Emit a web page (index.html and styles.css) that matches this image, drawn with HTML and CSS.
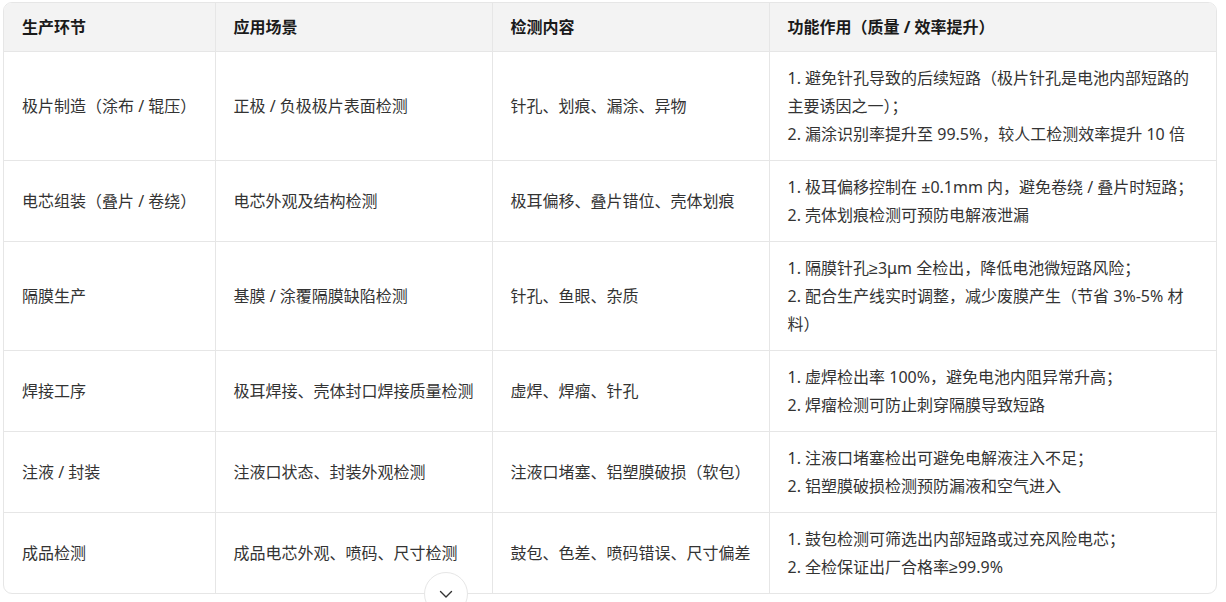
FILE: index.html
```html
<!DOCTYPE html>
<html lang="zh-CN">
<head>
<meta charset="utf-8">
<title>表格</title>
<link rel="stylesheet" href="styles.css">
</head>
<body>
<div class="wrap">
  <div class="table-box">
    <table class="grid">
      <colgroup>
        <col class="c1"><col class="c2"><col class="c3"><col class="c4">
      </colgroup>
      <thead>
        <tr>
          <th>生产环节</th>
          <th>应用场景</th>
          <th>检测内容</th>
          <th>功能作用（质量 / 效率提升）</th>
        </tr>
      </thead>
      <tbody>
        <tr>
          <td>极片制造（涂布 / 辊压）</td>
          <td>正极 / 负极极片表面检测</td>
          <td>针孔、划痕、漏涂、异物</td>
          <td>1. 避免针孔导致的后续短路（极片针孔是电池内部短路的主要诱因之一）；<br>2. 漏涂识别率提升至 99.5%，较人工检测效率提升 10 倍</td>
        </tr>
        <tr>
          <td>电芯组装（叠片 / 卷绕）</td>
          <td>电芯外观及结构检测</td>
          <td>极耳偏移、叠片错位、壳体划痕</td>
          <td><span class="keep">1. 极耳偏移控制在 ±0.1mm 内，避免卷绕 / 叠片时短路；</span><br>2. 壳体划痕检测可预防电解液泄漏</td>
        </tr>
        <tr>
          <td>隔膜生产</td>
          <td>基膜 / 涂覆隔膜缺陷检测</td>
          <td>针孔、鱼眼、杂质</td>
          <td>1. 隔膜针孔<span class="sym">≥</span>3μm 全检出，降低电池微短路风险；<br>2. 配合生产线实时调整，减少废膜产生（节省 3%-5% 材料）</td>
        </tr>
        <tr>
          <td>焊接工序</td>
          <td>极耳焊接、壳体封口焊接质量检测</td>
          <td>虚焊、焊瘤、针孔</td>
          <td>1. 虚焊检出率 100%，避免电池内阻异常升高；<br>2. 焊瘤检测可防止刺穿隔膜导致短路</td>
        </tr>
        <tr>
          <td>注液 / 封装</td>
          <td>注液口状态、封装外观检测</td>
          <td>注液口堵塞、铝塑膜破损（软包）</td>
          <td>1. 注液口堵塞检出可避免电解液注入不足；<br>2. 铝塑膜破损检测预防漏液和空气进入</td>
        </tr>
        <tr>
          <td>成品检测</td>
          <td>成品电芯外观、喷码、尺寸检测</td>
          <td>鼓包、色差、喷码错误、尺寸偏差</td>
          <td>1. 鼓包检测可筛选出内部短路或过充风险电芯；<br>2. 全检保证出厂合格率<span class="sym">≥</span>99.9%</td>
        </tr>
      </tbody>
    </table>
  </div>
  <button class="expand" type="button" aria-label="展开">
    <svg width="18" height="18" viewBox="0 0 18 18" fill="none" stroke="#333" stroke-width="1.4" stroke-linecap="round" stroke-linejoin="round"><path d="M3.5 6.5 L9 12 L14.5 6.5"/></svg>
  </button>
</div>
</body>
</html>
```

FILE: styles.css
```css
* { box-sizing: border-box; }
html, body { margin: 0; padding: 0; background: #fff; overflow: hidden; }
body {
  font-family: "Noto Sans", "Noto Sans CJK SC", sans-serif;
  font-size: 16px;
  color: #333;
}
.wrap {
  position: relative;
  margin: 2px 9px 0 3px;
  height: 600px;
}
.table-box {
  border: 1px solid #e6e6e6;
  border-radius: 9px;
  overflow: hidden;
}
.grid {
  width: 100%;
  border-collapse: collapse;
  table-layout: fixed;
}
.c1 { width: 211px; }
.c2 { width: 277px; }
.c3 { width: 277px; }
.c4 { width: auto; }
.grid th, .grid td {
  border-right: 1px solid #e6e6e6;
  border-bottom: 1px solid #e6e6e6;
  text-align: left;
  vertical-align: middle;
  line-height: 28px;
  padding: 12px 6px 12px 18px;
  word-break: break-all;
}
.grid th:last-child, .grid td:last-child {
  border-right: none;
  padding-right: 23px;
}
.grid tbody tr:last-child td { border-bottom: none; }
.grid th {
  background: #f3f3f3;
  font-weight: bold;
  color: #1a1a1a;
  padding-top: 10px;
  padding-bottom: 10px;
}
.keep { white-space: nowrap; }
.sym { font-family: "Liberation Sans", sans-serif; line-height: 1; }
.expand {
  position: absolute;
  left: 421px;
  top: 570px;
  width: 44px;
  height: 44px;
  border-radius: 50%;
  border: 1px solid #e6e6e6;
  background: #fff;
  display: flex;
  align-items: center;
  justify-content: center;
  padding: 0;
}
```
